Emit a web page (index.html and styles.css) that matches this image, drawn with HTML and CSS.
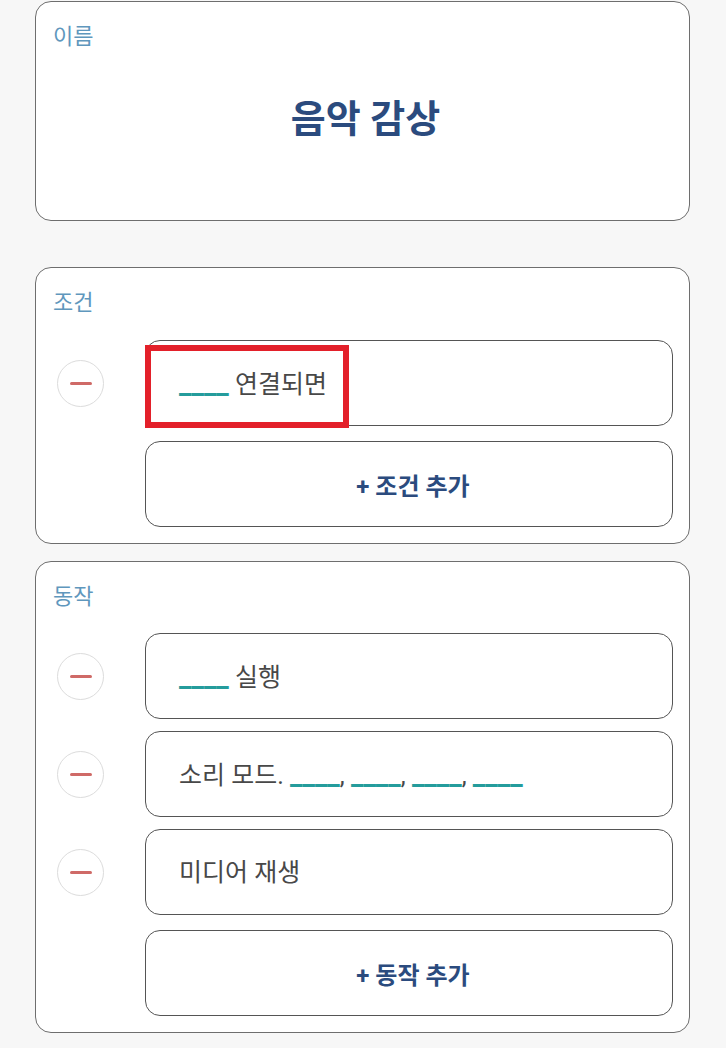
FILE: index.html
```html
<!DOCTYPE html>
<html lang="ko">
<head>
    <meta charset="UTF-8">
    <meta name="viewport" content="width=device-width, initial-scale=1.0">
    <title>루틴 편집</title>
    <link rel="stylesheet" href="styles.css">
</head>
<body>
    <div class="page">
        <section class="card name-card">
            <div class="card-label">이름</div>
            <div class="routine-name">음악 감상</div>
        </section>

        <section class="card">
            <div class="card-label">조건</div>
            <div class="rows">
                <div class="row">
                    <div class="remove-slot"><span class="remove-btn"><span class="bar"></span></span></div>
                    <div class="item">
                        <span class="blank">____</span>&nbsp;연결되면
                        <span class="highlight"></span>
                    </div>
                </div>
                <div class="row add-row">
                    <div class="remove-slot"></div>
                    <div class="item add-btn">+ 조건 추가</div>
                </div>
            </div>
        </section>

        <section class="card action-card">
            <div class="card-label">동작</div>
            <div class="rows">
                <div class="row">
                    <div class="remove-slot"><span class="remove-btn"><span class="bar"></span></span></div>
                    <div class="item"><span class="blank">____</span>&nbsp;실행</div>
                </div>
                <div class="row">
                    <div class="remove-slot"><span class="remove-btn"><span class="bar"></span></span></div>
                    <div class="item">소리 모드.&nbsp;<span class="blank">____</span>,&nbsp;<span class="blank">____</span>,&nbsp;<span class="blank">____</span>,&nbsp;<span class="blank">____</span></div>
                </div>
                <div class="row">
                    <div class="remove-slot"><span class="remove-btn"><span class="bar"></span></span></div>
                    <div class="item">미디어 재생</div>
                </div>
                <div class="row add-row">
                    <div class="remove-slot"></div>
                    <div class="item add-btn">+ 동작 추가</div>
                </div>
            </div>
        </section>
    </div>
</body>
</html>
```

FILE: styles.css
```css
* {
    margin: 0;
    padding: 0;
    box-sizing: border-box;
}

body {
    font-family: Roboto, 'Noto Sans CJK KR', sans-serif;
    background: #f7f7f7;
    width: 726px;
    height: 1048px;
    overflow: hidden;
}

.page {
    padding: 1px 36px 0 35px;
    display: flex;
    flex-direction: column;
}

.card {
    background: white;
    border: 1px solid #6e6e6e;
    border-radius: 16px;
    padding: 0 16px 16px 0;
    margin-bottom: 17px;
}

.card-label {
    color: #5f97bd;
    font-size: 22px;
    line-height: 28px;
    padding: 21px 0 0 17px;
}

.name-card {
    height: 220px;
    margin-bottom: 46px;
}

.routine-name {
    text-align: center;
    color: #2b4b7e;
    font-size: 38px;
    font-weight: bold;
    line-height: 52px;
    margin-top: 42px;
    padding-left: 22px;
}

.rows {
    display: flex;
    flex-direction: column;
    gap: 12px;
    margin-top: 23px;
}

.action-card .rows {
    margin-top: 22px;
}

.row {
    display: flex;
    align-items: center;
}

.add-row {
    margin-top: 3px;
}

.remove-slot {
    width: 109px;
    flex-shrink: 0;
    padding-left: 21px;
}

.remove-btn {
    width: 47px;
    height: 47px;
    border: 1px solid #dcdcdc;
    border-radius: 50%;
    display: flex;
    align-items: center;
    justify-content: center;
}

.remove-btn .bar {
    width: 22px;
    height: 3px;
    border-radius: 2px;
    background: #cf6a67;
}

.item {
    position: relative;
    flex: 1;
    height: 86px;
    border: 1px solid #555;
    border-radius: 15px;
    display: flex;
    align-items: baseline;
    padding: 28px 0 0 33px;
    font-size: 25px;
    line-height: 30px;
    color: #484848;
    background: white;
}

.blank {
    color: #249c9c;
    font-size: 28px;
    font-weight: bold;
}

.add-btn {
    align-items: center;
    justify-content: center;
    padding: 5px 0 0 8px;
    font-size: 24px;
    font-weight: bold;
    color: #2b4b7e;
}

.highlight {
    position: absolute;
    left: -1px;
    top: 4px;
    width: 204px;
    height: 83px;
    border: 6px solid #e3202a;
}
```
